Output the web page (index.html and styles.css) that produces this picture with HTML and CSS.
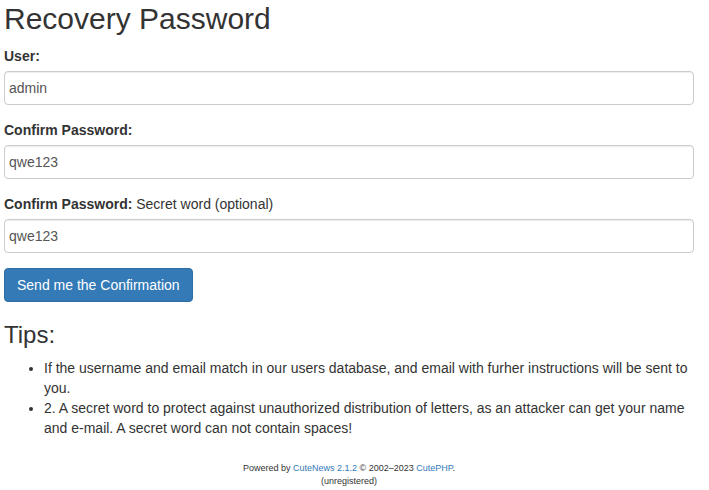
FILE: index.html
```html
<!DOCTYPE html>
<html lang="en">
<head>
    <meta charset="UTF-8">
    <meta name="viewport" content="width=device-width, initial-scale=1.0">
    <title>Recovery Password</title>
    <link rel="stylesheet" href="styles.css">
</head>
<body>
    <div class="page">
        <h2 class="title">Recovery Password</h2>

        <form class="recovery-form">
            <div class="form-group">
                <label>User:</label>
                <input type="text" class="form-control" value="admin">
            </div>
            <div class="form-group">
                <label>Confirm Password:</label>
                <input type="text" class="form-control" value="qwe123">
            </div>
            <div class="form-group">
                <label>Confirm Password: <span class="hint">Secret word (optional)</span></label>
                <input type="text" class="form-control" value="qwe123">
            </div>
            <button type="button" class="btn">Send me the Confirmation</button>
        </form>

        <h3 class="tips-title">Tips:</h3>
        <ul class="tips">
            <li>If the username and email match in our users database, and email with furher instructions will be sent to you.</li>
            <li>2. A secret word to protect against unauthorized distribution of letters, as an attacker can get your name and e-mail. A secret word can not contain spaces!</li>
        </ul>

        <footer>
            <p>Powered by <a href="#">CuteNews 2.1.2</a> &copy; 2002&ndash;2023 <a href="#">CutePHP</a>.</p>
            <p>(unregistered)</p>
        </footer>
    </div>
</body>
</html>
```

FILE: styles.css
```css
body {
    font-family: 'Liberation Sans', Arial, Helvetica, sans-serif;
    font-size: 14px;
    line-height: 20px;
    margin: 0;
    color: #333;
    background-color: #fff;
}
.page {
    padding: 0 15px 0 4px;
}
.title {
    font-size: 30px;
    font-weight: 500;
    line-height: 33px;
    margin: 2px 0 11px;
}
.form-group {
    margin-bottom: 15px;
}
label {
    display: block;
    font-weight: bold;
    margin-bottom: 5px;
}
.hint {
    font-weight: normal;
}
.form-control {
    display: block;
    box-sizing: border-box;
    width: 100%;
    height: 34px;
    padding: 6px 4px;
    font-family: inherit;
    font-size: 14px;
    color: #555;
    background-color: #fff;
    border: 1px solid #ccc;
    border-radius: 4px;
    box-shadow: inset 0 1px 1px rgba(0, 0, 0, 0.075);
}
.btn {
    height: 34px;
    padding: 6px 12px;
    font-family: inherit;
    font-size: 14px;
    line-height: 20px;
    color: #fff;
    background-color: #337ab7;
    border: 1px solid #2e6da4;
    border-radius: 4px;
    cursor: pointer;
}
.tips-title {
    font-size: 24px;
    font-weight: 500;
    line-height: 26px;
    margin: 20px 0 10px;
}
.tips {
    margin: 0 0 10px;
    padding-left: 40px;
}
footer {
    margin-top: 24px;
    text-align: center;
    font-size: 9px;
    line-height: 13px;
}
footer p {
    margin: 0;
}
footer a {
    color: #337ab7;
    text-decoration: none;
}
```
